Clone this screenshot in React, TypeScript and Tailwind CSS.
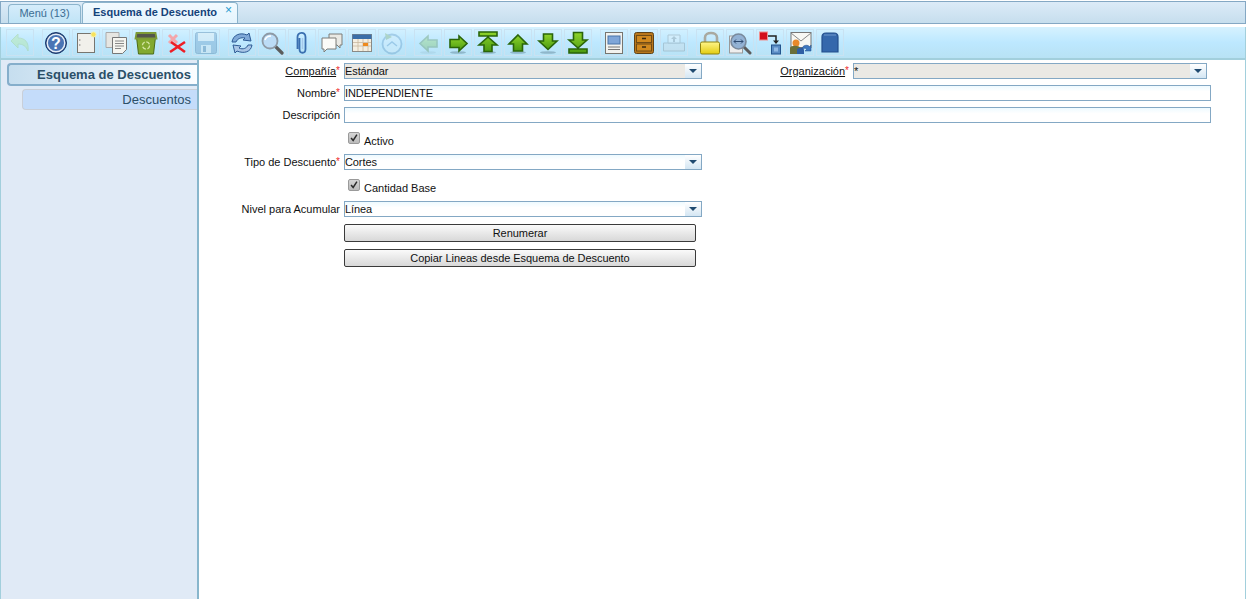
import type { ReactNode } from "react"

const font = { fontFamily: '"Liberation Sans", Arial, sans-serif' }

function Shade() {
  return <ellipse cx="12" cy="21.5" rx="8" ry="1.300" fill="#4f7486" opacity="0.4" />
}

function Arrow({ d, dim }: { d: string; dim?: boolean }) {
  return (
    <svg viewBox="0 0 24 24" className={`h-6 w-6 ${dim ? "opacity-25" : ""}`}>
      <defs>
        <linearGradient id="ag" x1="0" y1="0" x2="0" y2="1">
          <stop offset="0" stopColor="#8fd42c" />
          <stop offset="1" stopColor="#4a9a10" />
        </linearGradient>
      </defs>
      <Shade />
      <path d={d} fill="url(#ag)" stroke="#2a650a" strokeWidth="1.600" strokeLinejoin="miter" />
    </svg>
  )
}

const icons: Record<string, ReactNode> = {
  undo: (
    <svg viewBox="0 0 24 24" className="h-6 w-6 opacity-40">
      <path d="M3 10l7-7v4c7 0 11 4 10 13-2-5-5-7-10-7v4z" fill="#b4e89a" stroke="#9ccf86" />
    </svg>
  ),
  help: (
    <svg viewBox="0 0 24 24" className="h-6 w-6">
      <circle cx="12" cy="12" r="10.500" fill="#1f3f78" stroke="#1d3a6e" />
      <circle cx="12" cy="12" r="8.800" fill="#4a74b4" stroke="#e6edf6" strokeWidth="1.500" />
      <text x="12" y="17.500" textAnchor="middle" fontSize="16" fontWeight="700" fill="#fff" style={font}>?</text>
    </svg>
  ),
  newDoc: (
    <svg viewBox="0 0 24 24" className="h-6 w-6">
      <rect x="3.500" y="2.500" width="17" height="19" fill="#f1f0eb" stroke="#77756f" />
      <circle cx="5.800" cy="9" r=".7" fill="#777" />
      <circle cx="5.800" cy="14" r=".7" fill="#777" />
      <circle cx="19.500" cy="3.500" r="2.600" fill="#f7e25c" stroke="#f4f2b0" />
    </svg>
  ),
  copy: (
    <svg viewBox="0 0 24 24" className="h-6 w-6">
      <path d="M2 1.500h13v15H2z" fill="#e6e6e2" stroke="#aaa" />
      <path d="M8.500 6.500h14v12l-4 4h-10z" fill="#f5f5f0" stroke="#777" />
      <path d="M11 10h9M11 12.500h9M11 15h9M11 17.500h6" stroke="#888" />
    </svg>
  ),
  trash: (
    <svg viewBox="0 0 24 24" className="h-6 w-6">
      <path d="M2.500 6h19l-2 17h-15z" fill="#82a92f" stroke="#4d6c18" />
      <path d="M2.500 2h19l1 5.500h-21z" fill="#54564c" stroke="#7d9a36" strokeWidth="1.800" />
      <circle cx="12" cy="14.500" r="3.600" fill="none" stroke="#d5e6a5" strokeWidth="1.300" strokeDasharray="4 1.600" />
    </svg>
  ),
  del: (
    <svg viewBox="0 0 24 24" className="h-6 w-6">
      <path d="M5 4l8 8M13 4l-8 8" stroke="#f3a6ab" strokeWidth="3" />
      <path d="M6 21l15-10M7 11l14 10" stroke="#ee1d25" strokeWidth="2.600" />
    </svg>
  ),
  save: (
    <svg viewBox="0 0 24 24" className="h-6 w-6 opacity-40">
      <rect x="1.500" y="1.500" width="21" height="21" rx="2" fill="#6f9fc6" stroke="#4a7ca6" />
      <rect x="4" y="2" width="16" height="8" fill="#e8eef2" />
      <rect x="7" y="14" width="10" height="8" fill="#dce8f0" />
      <rect x="9" y="15" width="3" height="6" fill="#4a7ca6" />
    </svg>
  ),
  refresh: (
    <svg viewBox="0 0 24 24" className="h-6 w-6">
      <path d="M2 11C3 4 10 1 17 4l2-2 2 8-8-1 2-2C11 6 7 8 6 11z" fill="#7fa9d8" stroke="#2d5a94" />
      <path d="M22 14c-1 7-8 9-15 6l-2 2-2-8 8 1-2 2c4 2 8 0 9-3z" fill="#a9c6e6" stroke="#2d5a94" />
    </svg>
  ),
  find: (
    <svg viewBox="0 0 24 24" className="h-6 w-6">
      <path d="M15 15l7 7" stroke="#5c5c5c" strokeWidth="3.200" strokeLinecap="round" />
      <circle cx="10" cy="10" r="7.500" fill="#bcdcf6" stroke="#8e9aa6" strokeWidth="1.800" />
      <path d="M5 9c1-3 3-4 6-4" stroke="#fff" strokeWidth="1.500" fill="none" />
    </svg>
  ),
  clip: (
    <svg viewBox="0 0 24 24" className="h-6 w-6">
      <path d="M9.500 7v11c0 5 6 5 6 0V6c0-6-8-5-8 0v12" fill="none" stroke="#3a6fb0" strokeWidth="1.800" />
      <path d="M12.500 7v11" fill="none" stroke="#a5c8ea" strokeWidth="1.400" />
    </svg>
  ),
  chat: (
    <svg viewBox="0 0 24 24" className="h-6 w-6">
      <path d="M9 3h13v11h-2v3l-3-3H9z" fill="#e9e9e4" stroke="#7d7d78" />
      <path d="M2 7h14v11H7l-3 3v-3H2z" fill="#fbfbf8" stroke="#7d7d78" />
    </svg>
  ),
  table: (
    <svg viewBox="0 0 24 24" className="h-6 w-6">
      <rect x="2.500" y="3.500" width="19" height="17" fill="#f4efe2" stroke="#8a8a86" />
      <rect x="2.500" y="3.500" width="19" height="4.500" fill="#3a6ea8" />
      <path d="M3 11.500h18M3 15h18M8 8v12M13 8v12M18 8v12" stroke="#c9b9a0" strokeWidth=".8" />
      <rect x="13" y="12" width="5" height="3" fill="#ee8a1d" />
    </svg>
  ),
  history: (
    <svg viewBox="0 0 24 24" className="h-6 w-6 opacity-30">
      <circle cx="12" cy="13" r="9.500" fill="#dff0fa" stroke="#4c87b8" strokeWidth="1.800" />
      <path d="M7 15l5-4 5 4" fill="none" stroke="#4c87b8" strokeWidth="1.400" />
      <path d="M5 2l1 7 6-3z" fill="#70a050" />
    </svg>
  ),
  prev: <Arrow dim d="M21 9h-9V5l-8 7.500 8 7.500v-4h9z" />,
  next: <Arrow d="M4 8.500h9V5l8 7.500-8 7.500v-3.500H4z" />,
  first: <Arrow d="M3 1h18v4H3zM12 6l9 8h-5v6.500H8V14H3z" />,
  up: <Arrow d="M12 4l9 9h-4.500v7h-9v-7H3z" />,
  down: <Arrow d="M7.500 3h9v7H21l-9 8.500L3 10h4.500z" />,
  last: <Arrow d="M7.500 1.500h9V9H21l-9 8-9-8h4.500zM3 18h18v4H3z" />,
  report: (
    <svg viewBox="0 0 24 24" className="h-6 w-6">
      <rect x="3.500" y="1.500" width="17" height="21" fill="#f2f2ee" stroke="#77756f" />
      <rect x="6" y="5" width="12" height="8" fill="#7fa6d8" stroke="#4a74a8" />
      <path d="M6 16h12M6 18.500h12" stroke="#777" />
    </svg>
  ),
  archive: (
    <svg viewBox="0 0 24 24" className="h-6 w-6">
      <rect x="2.500" y="1.500" width="19" height="21" rx="2" fill="#b8771c" stroke="#5f4318" />
      <rect x="4.500" y="4.500" width="15" height="7" fill="#d0891f" stroke="#704c16" />
      <rect x="4.500" y="13" width="15" height="7" fill="#d0891f" stroke="#704c16" />
      <path d="M10 7.500h4M10 16h4" stroke="#3b2a10" strokeWidth="1.400" />
    </svg>
  ),
  print: (
    <svg viewBox="0 0 24 24" className="h-6 w-6 opacity-25">
      <path d="M1.500 12h21v8h-21z" fill="#d5d5d5" stroke="#666" />
      <path d="M6 4h12v8H6z" fill="#f5f5f5" stroke="#666" />
      <path d="M12 5l3 3h-2v3h-2V8H9z" fill="#666" />
    </svg>
  ),
  lock: (
    <svg viewBox="0 0 24 24" className="h-6 w-6">
      <defs>
        <linearGradient id="lk" x1="0" y1="0" x2="0" y2="1">
          <stop offset="0" stopColor="#fff58a" />
          <stop offset="1" stopColor="#e2cc10" />
        </linearGradient>
      </defs>
      <path d="M7 11V6.500c0-6 12-6 12 0V11" fill="none" stroke="#a9a9a0" strokeWidth="2.600" />
      <rect x="2.500" y="11" width="19" height="12" rx="1.500" fill="url(#lk)" stroke="#8f8412" />
    </svg>
  ),
  zoom: (
    <svg viewBox="0 0 24 24" className="h-6 w-6">
      <rect x="1.500" y="5" width="13" height="17" fill="#eee" stroke="#999" />
      <path d="M15 15l7 7" stroke="#5c5c5c" strokeWidth="3" strokeLinecap="round" />
      <circle cx="10.500" cy="10.500" r="7.500" fill="#93b2d4" stroke="#7a8a9c" strokeWidth="1.600" />
      <path d="M6 10.500h9M6 10.500l2-2M6 10.500l2 2M15 10.500l-2-2M15 10.500l-2 2" stroke="#2d4a70" />
    </svg>
  ),
  workflow: (
    <svg viewBox="0 0 24 24" className="h-6 w-6">
      <rect x="1.500" y="1" width="8" height="8" fill="#d30d1a" stroke="#f09090" />
      <rect x="13.500" y="14" width="9" height="9" fill="#5a8cc4" stroke="#23538c" />
      <rect x="16" y="16.500" width="4" height="4" fill="#8fb8e4" />
      <path d="M10 5h8v5" fill="none" stroke="#222" strokeWidth="1.500" />
      <path d="M15 9.500h6l-3 3.500z" fill="#222" />
    </svg>
  ),
  mail: (
    <svg viewBox="0 0 24 24" className="h-6 w-6">
      <rect x="3" y="1.500" width="20" height="15" fill="#f8f8f4" stroke="#777" />
      <path d="M3 2l10 8 10-8" fill="none" stroke="#888" />
      <circle cx="8" cy="12" r="3.500" fill="#e8892a" />
      <path d="M2 23v-6c0-3 10-3 10 0v6z" fill="#6a6f3a" />
      <path d="M9 23v-4c0-3 7-3 7 0v4z" fill="#2f5fa4" />
      <path d="M14 18c0-4 6-5 8-2l1-2v6h-6l2-2c-1-1-3-1-5 0z" fill="#3e78c0" stroke="#1f4a86" strokeWidth=".5" />
    </svg>
  ),
  product: (
    <svg viewBox="0 0 24 24" className="h-6 w-6">
      <path d="M4 6c0-3 2-4 4-4h8c2 0 4 1 4 4v15H4z" fill="#3468ac" stroke="#234f8c" strokeWidth="1.200" />
      <path d="M6 4h12" stroke="#6e98cc" />
    </svg>
  ),
}

function ToolButton({ name, wide }: { name: string; wide?: boolean }) {
  return (
    <div className={`flex h-[27px] w-7 shrink-0 items-center justify-center border border-[#c9e2f2] ${wide ? "ml-[6px]" : ""}`}>
      {icons[name]}
    </div>
  )
}

function Label({ children, required, underline, width = "w-[141px]" }: { children: ReactNode; required?: boolean; underline?: boolean; width?: string }) {
  return (
    <div className={`${width} shrink-0 text-right text-[11px] leading-[13px] text-[#111]`}>
      <span className={underline ? "underline" : ""}>{children}</span>
      {required && <span className="relative -top-px text-[10px] text-[#ee2a2a]">*</span>}
    </div>
  )
}

function SelectBox({ value, gray, width }: { value: string; gray?: boolean; width: string }) {
  return (
    <div className={`flex h-4 ${width} items-stretch border border-[#84a8c4] text-[11px] leading-[14px] tracking-[-0.1px] text-[#111]`}>
      <div className={`flex-1 ${gray ? "bg-[#ebe9e4]" : "bg-gradient-to-b from-[#eefaff] to-white to-40%"}`}>{value}</div>
      <div className="flex w-4 items-center justify-center bg-gradient-to-b from-white to-[#d4e6f3]">
        <div className="h-0 w-0 border-x-[4px] border-t-[4px] border-x-transparent border-t-[#1f4a70]" />
      </div>
    </div>
  )
}

function TextBox({ value }: { value?: string }) {
  return (
    <div className="h-4 w-[867px] border border-[#84a8c4] bg-gradient-to-b from-[#eefaff] to-white to-40% text-[11px] leading-[14px] tracking-[-0.1px] text-[#111]">
      {value}
    </div>
  )
}

function Row({ label, required, underline, className, children }: { label: string; required?: boolean; underline?: boolean; className: string; children: ReactNode }) {
  return (
    <div className={`flex items-center gap-1 ${className}`}>
      <Label required={required} underline={underline}>{label}</Label>
      {children}
    </div>
  )
}

function CheckRow({ label, className }: { label: string; className: string }) {
  return (
    <div className={`ml-[149px] flex h-[18px] items-start gap-1 ${className}`}>
      <div className="flex h-3 w-3 items-center justify-center rounded-[2px] border border-[#9a9a9a] bg-gradient-to-b from-[#d4d4d4] to-[#bbbbbb]">
        <svg viewBox="0 0 12 12" className="h-[10px] w-[10px]">
          <path d="M2.500 6l2.500 3 4.500-7" fill="none" stroke="#2a2a2a" strokeWidth="1.800" />
        </svg>
      </div>
      <span className="mt-[3px] text-[11px] leading-[13px] text-[#111]">{label}</span>
    </div>
  )
}

function ActionButton({ label, className }: { label: string; className: string }) {
  return (
    <button className={`ml-[145px] block h-[18px] w-[352px] rounded-[2px] border border-[#3a3a3a] bg-gradient-to-b from-[#fafafa] to-[#d8d8d8] text-[11px] leading-[14px] tracking-[-0.05px] text-[#111] ${className}`}>
      {label}
    </button>
  )
}

export default function App() {
  return (
    <div className="flex h-[599px] w-[1246px] flex-col overflow-hidden bg-white" style={font}>
      {/* tab strip */}
      <div className="mt-px flex h-[23px] items-end gap-px border border-[#84a8c4] bg-gradient-to-b from-[#dcebf8] to-[#c6deed] pl-[7px]">
        <div className="h-[19px] w-[73px] rounded-t-[4px] border border-b-0 border-[#8cb4cc] bg-gradient-to-b from-[#d5ecfb] to-[#c0e4f6] text-center text-[11px] leading-[17px] text-[#3c6e94]">
          Menú (13)
        </div>
        <div className="relative h-[21px] w-[156px] rounded-t-[4px] border border-b-0 border-[#8cb4cc] bg-gradient-to-b from-[#f2faff] to-[#e4f4fd] pl-[10px] text-[11px] font-bold leading-[19px] text-[#15437a]">
          Esquema de Descuento
          <span className="absolute right-[5px] top-0 text-[12px] font-normal leading-[15px] text-[#1e9ad0]">×</span>
        </div>
      </div>

      {/* toolbar */}
      <div className="mt-[3px] flex h-[33px] shrink-0 items-center gap-[2px] border-x border-b-[2px] border-[#a2cfdc] border-t-0 bg-gradient-to-b from-[#d6f2ff] via-[#bde8ff] to-[#b8e2f4] pl-[5px]">
        <ToolButton name="undo" />
        <ToolButton name="help" wide />
        <ToolButton name="newDoc" />
        <ToolButton name="copy" />
        <ToolButton name="trash" />
        <ToolButton name="del" />
        <ToolButton name="save" />
        <ToolButton name="refresh" wide />
        <ToolButton name="find" />
        <ToolButton name="clip" />
        <ToolButton name="chat" />
        <ToolButton name="table" />
        <ToolButton name="history" />
        <ToolButton name="prev" wide />
        <ToolButton name="next" />
        <ToolButton name="first" />
        <ToolButton name="up" />
        <ToolButton name="down" />
        <ToolButton name="last" />
        <ToolButton name="report" wide />
        <ToolButton name="archive" />
        <ToolButton name="print" />
        <ToolButton name="lock" wide />
        <ToolButton name="zoom" />
        <ToolButton name="workflow" />
        <ToolButton name="mail" />
        <ToolButton name="product" />
      </div>

      <div className="flex min-h-0 flex-1 border-x border-[#a2cfdc]">
        {/* sidebar */}
        <div className="flex w-[198px] shrink-0 flex-col border-r-[2px] border-[#88b6cc] bg-[#e0eaf6] pt-[3px]">
          <div className="ml-[6px] h-[23px] rounded-l-[4px] border-y-[2px] border-l-[2px] border-[#85aecb] bg-gradient-to-r from-[#c6deef] to-[#fbfdff] pr-[6px] text-right text-[13px] font-bold leading-[19px] text-[#2b4f68]">
            Esquema de Descuentos
          </div>
          <div className="ml-[21px] mt-[3px] h-[21px] rounded-l-[4px] border-y border-l border-[#c9cfd8] bg-[#c4dcfa] pr-[6px] text-right text-[13px] leading-[19px] text-[#2b4f68]">
            Descuentos
          </div>
        </div>

        {/* form */}
        <div className="min-w-0 flex-1 pt-[3px]">
          <div className="flex items-center">
            <Row label="Compañía" required underline className="">
              <SelectBox value="Estándar" gray width="w-[358px]" />
            </Row>
            <Label required underline width="w-[147px]">Organización</Label>
            <div className="ml-1">
              <SelectBox value="*" gray width="w-[354px]" />
            </div>
          </div>
          <Row label="Nombre" required className="mt-[6px]">
            <TextBox value="INDEPENDIENTE" />
          </Row>
          <Row label="Descripción" className="mt-[6px]">
            <TextBox />
          </Row>
          <CheckRow label="Activo" className="mt-[9px]" />
          <Row label="Tipo de Descuento" required className="mt-[4px]">
            <SelectBox value="Cortes" width="w-[358px]" />
          </Row>
          <CheckRow label="Cantidad Base" className="mt-[9px]" />
          <Row label="Nivel para Acumular" className="mt-[4px]">
            <SelectBox value="Línea" width="w-[358px]" />
          </Row>
          <ActionButton label="Renumerar" className="mt-[7px]" />
          <ActionButton label="Copiar Lineas desde Esquema de Descuento" className="mt-[7px]" />
        </div>
      </div>
    </div>
  )
}
